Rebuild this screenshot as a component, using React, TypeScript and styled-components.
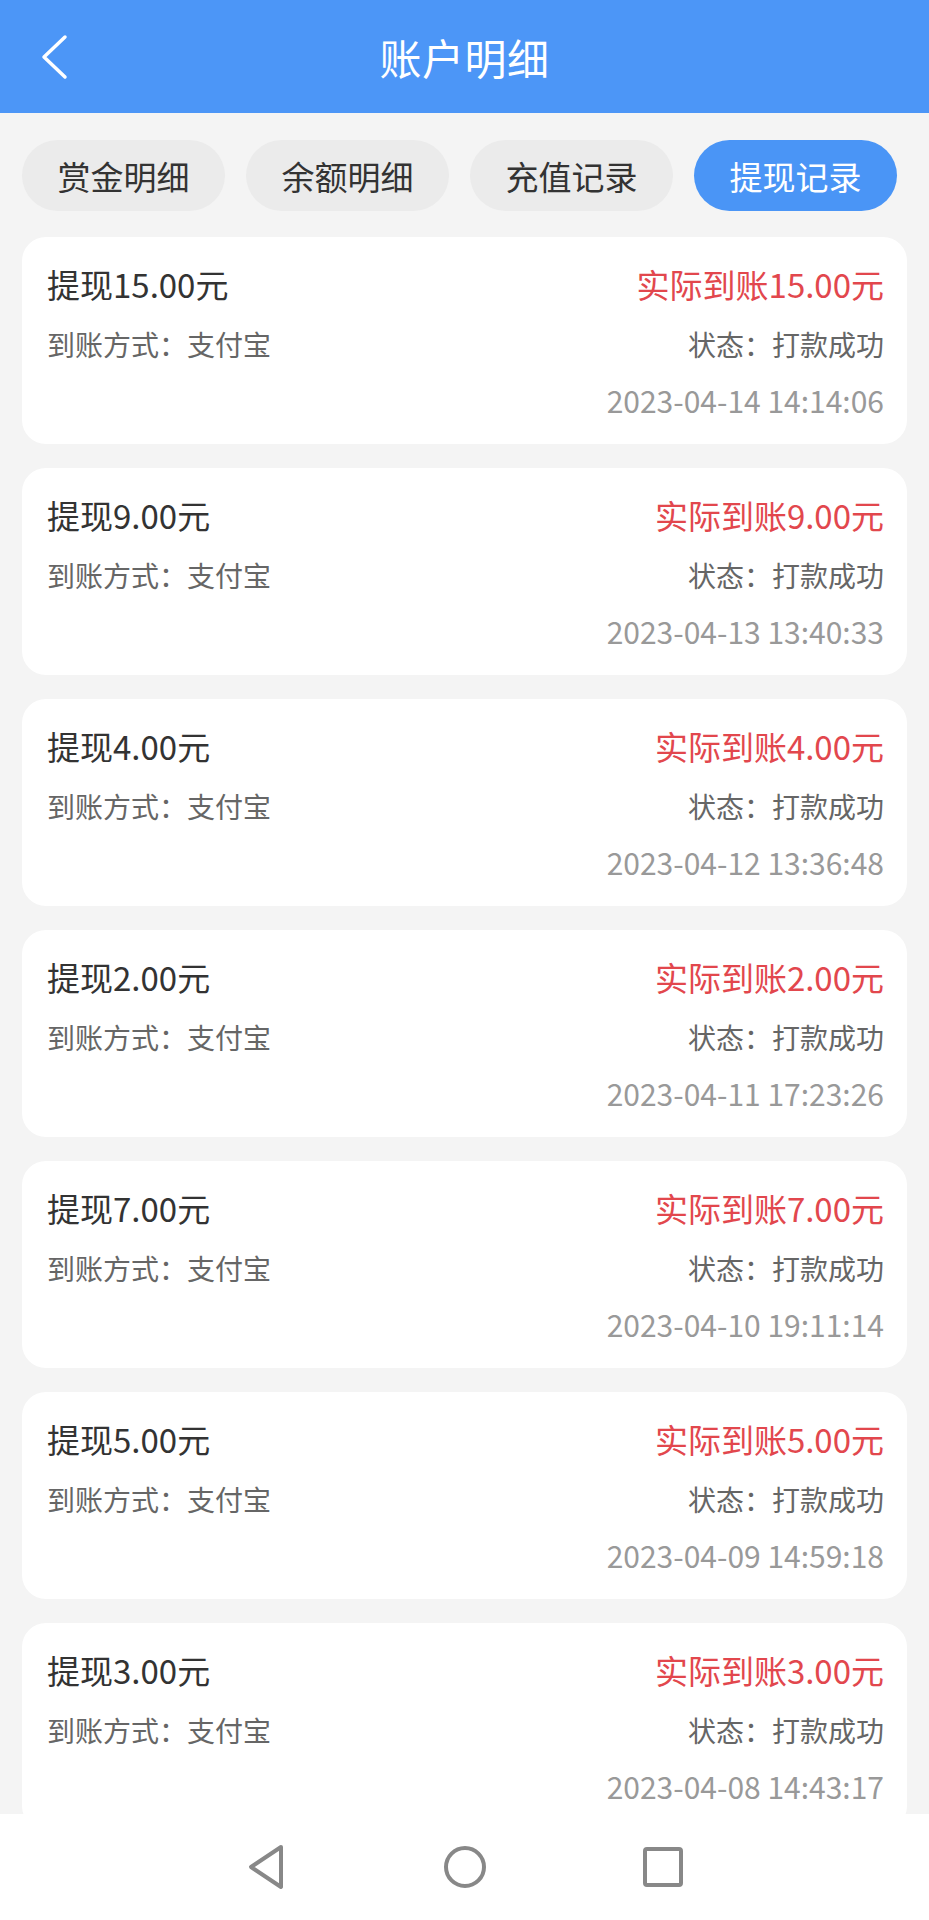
import styled, { createGlobalStyle } from "styled-components";
import { useState } from "react";

const GlobalStyle = createGlobalStyle`
  * {
    box-sizing: border-box;
  }
  body {
    margin: 0;
    background-color: #f4f4f4;
    font-family: "Noto Sans CJK SC", "Noto Sans", sans-serif;
  }
`;

const Page = styled.div`
  min-height: 1920px;
  background-color: #f4f4f4;
  padding-bottom: 106px;
`;

const Header = styled.header`
  height: 113px;
  background-color: #4c96f7;
  display: grid;
  grid-template-columns: 1fr auto 1fr;
  align-items: center;
  color: #fff;
  & .back {
    display: flex;
    align-items: center;
    padding-left: 40px;
  }
  & h1 {
    margin: 0;
    font-size: 42px;
    font-weight: 400;
    letter-spacing: 0.5px;
  }
`;

const Tabs = styled.nav`
  display: flex;
  gap: 21px;
  padding: 27px 22px 0;
`;

const Tab = styled.button<{ $active?: boolean }>`
  width: 203px;
  height: 71px;
  border: none;
  border-radius: 36px;
  font-family: inherit;
  font-size: 33px;
  color: ${(p) => (p.$active ? "#fff" : "#333")};
  background-color: ${(p) => (p.$active ? "#4a95f6" : "#ebebeb")};
  cursor: pointer;
`;

const List = styled.div`
  display: flex;
  flex-direction: column;
  gap: 24px;
  padding: 26px 22px 0;
`;

const Card = styled.div`
  background-color: #fff;
  border-radius: 24px;
  padding: 27px 23px 27px 25px;
  display: flex;
  flex-direction: column;
  & .row {
    display: flex;
    justify-content: space-between;
    align-items: center;
  }
  & .amount {
    font-size: 33px;
    line-height: 40px;
    color: #333;
  }
  & .actual {
    font-size: 33px;
    line-height: 40px;
    color: #e2474d;
  }
  & .info {
    margin-top: 23px;
    font-size: 28px;
    line-height: 34px;
    color: #666;
  }
  & .time {
    margin-top: 22px;
    align-self: flex-end;
    font-size: 30px;
    line-height: 34px;
    color: #999;
  }
`;

const NavBar = styled.div`
  position: fixed;
  left: 0;
  right: 0;
  bottom: 0;
  height: 106px;
  background-color: #fff;
  display: flex;
  justify-content: center;
  align-items: center;
  gap: 155px;
  & svg {
    display: block;
  }
`;

const records = [
  { amount: "15.00", time: "2023-04-14 14:14:06" },
  { amount: "9.00", time: "2023-04-13 13:40:33" },
  { amount: "4.00", time: "2023-04-12 13:36:48" },
  { amount: "2.00", time: "2023-04-11 17:23:26" },
  { amount: "7.00", time: "2023-04-10 19:11:14" },
  { amount: "5.00", time: "2023-04-09 14:59:18" },
  { amount: "3.00", time: "2023-04-08 14:43:17" },
];

const tabs = ["赏金明细", "余额明细", "充值记录", "提现记录"];

const App = () => {
  const [active, setActive] = useState<number>(3);
  return (
    <Page>
      <GlobalStyle />
      <Header>
        <div className="back">
          <svg width="30" height="46" viewBox="0 0 30 46">
            <path
              d="M25 3 L4 23 L25 43"
              fill="none"
              stroke="#fff"
              strokeWidth="3.5"
              strokeLinecap="round"
              strokeLinejoin="round"
            />
          </svg>
        </div>
        <h1>账户明细</h1>
        <div />
      </Header>
      <Tabs>
        {tabs.map((tab, index) => (
          <Tab key={tab} $active={index === active} onClick={() => setActive(index)}>
            {tab}
          </Tab>
        ))}
      </Tabs>
      <List>
        {records.map((record, index) => (
          <Card key={index}>
            <div className="row">
              <span className="amount">提现{record.amount}元</span>
              <span className="actual">实际到账{record.amount}元</span>
            </div>
            <div className="row info">
              <span>到账方式：支付宝</span>
              <span>状态：打款成功</span>
            </div>
            <span className="time">{record.time}</span>
          </Card>
        ))}
      </List>
      <NavBar>
        <svg width="40" height="46" viewBox="0 0 40 46">
          <path
            d="M34 3 L4 23 L34 43 Z"
            fill="none"
            stroke="#888"
            strokeWidth="4"
            strokeLinejoin="round"
          />
        </svg>
        <svg width="46" height="46" viewBox="0 0 46 46">
          <circle cx="23" cy="23" r="19" fill="none" stroke="#888" strokeWidth="4" />
        </svg>
        <svg width="40" height="40" viewBox="0 0 40 40">
          <rect x="2" y="2" width="36" height="36" rx="2" fill="none" stroke="#888" strokeWidth="4" />
        </svg>
      </NavBar>
    </Page>
  );
};

export default App;
